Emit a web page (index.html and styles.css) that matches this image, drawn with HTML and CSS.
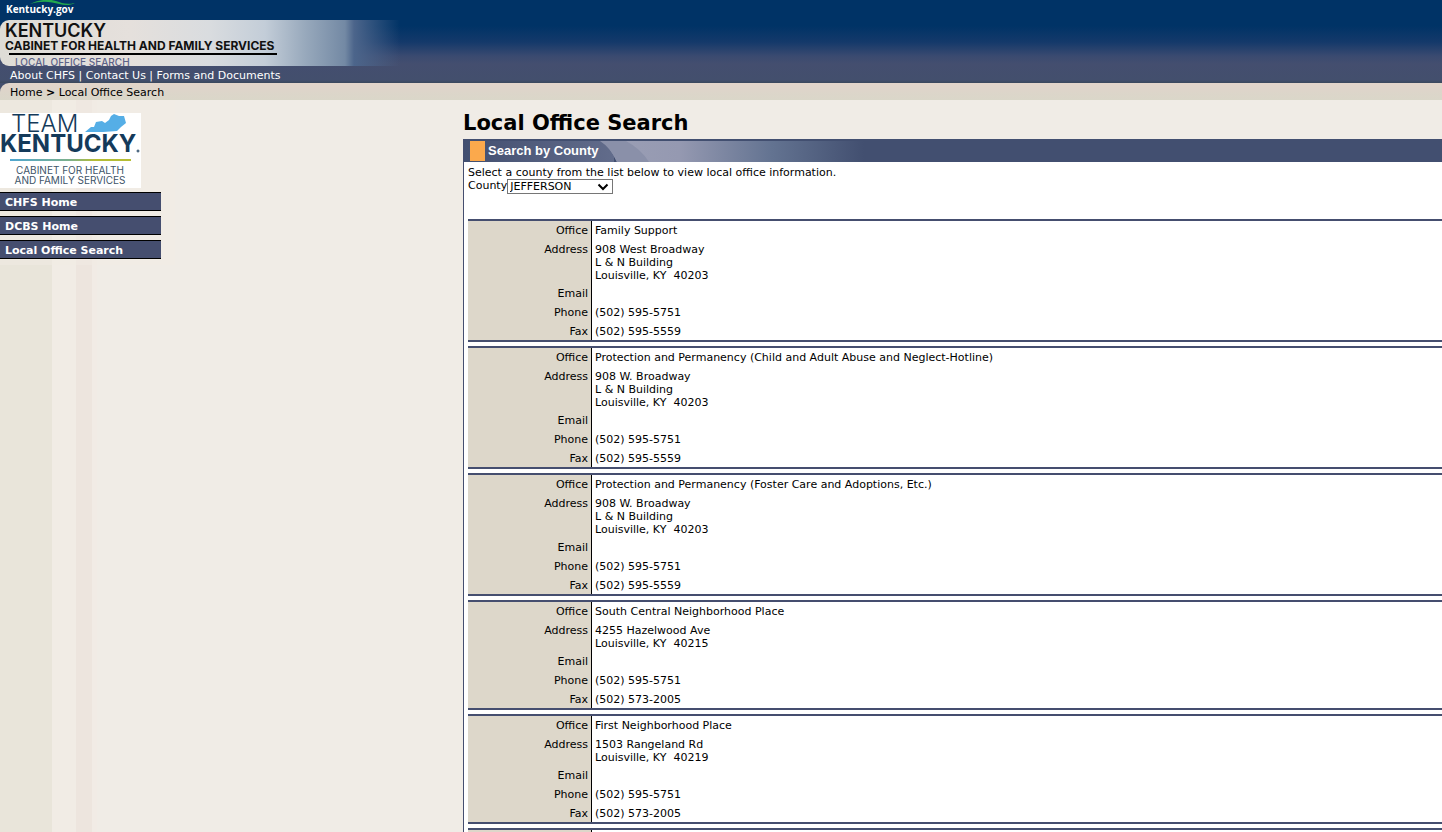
FILE: index.html
```html
<!DOCTYPE html>
<html lang="en">
<head>
<meta charset="utf-8">
<title>Local Office Search</title>
<link rel="stylesheet" href="styles.css">
</head>
<body>
<header class="site-header">
  <a class="portal" href="#">
    <svg class="portal-arc" viewBox="0 0 46 8" aria-hidden="true"><path d="M0 4C10-1 20-1 26 1S36 5 45 3C37 7 30 4 22 2.500S8 2 0 4Z" fill="#22a94f"/></svg>
    <span class="portal-name">Kentucky.gov</span>
  </a>
  <div class="banner">
    <div class="agency">
      <div class="agency-state">KENTUCKY</div>
      <div class="agency-name">CABINET FOR HEALTH AND FAMILY SERVICES</div>
      <div class="agency-section">LOCAL OFFICE SEARCH</div>
    </div>
  </div>
  <nav class="top-nav"><a href="#">About CHFS</a> | <a href="#">Contact Us</a> | <a href="#">Forms and Documents</a></nav>
</header>
<nav class="crumbs"><div class="crumbs-inner"><a href="#">Home</a> <b>&gt;</b> <a href="#">Local Office Search</a></div></nav>
<div class="columns">
  <aside class="side">
    <svg class="team-logo" viewBox="0 0 141 75" role="img" aria-label="Team Kentucky Cabinet for Health and Family Services">
      <rect width="141" height="75" fill="#fff"/>
      <text class="logo-team" x="11" y="19">TEAM</text>
      <path d="M85 19L91 14L94 14L96 9L102 8L105 10L109 7L111 3L114 1L119 3L124 3L126 10L121 14L117 18L103 19Z" fill="#55aee6"/>
      <text class="logo-ky" x="0" y="39">KENTUCKY</text>
      <circle cx="138" cy="38" r="1" fill="none" stroke="#143a5a"/>
      <defs><linearGradient id="rule"><stop offset="0" stop-color="#4fa6d0"/><stop offset=".5" stop-color="#7db08a"/><stop offset=".7" stop-color="#b5bd35"/></linearGradient></defs>
      <rect x="10" y="46" width="121" height="2" fill="url(#rule)"/>
      <text class="logo-small" x="70" y="61">CABINET FOR HEALTH</text>
      <text class="logo-small" x="70" y="71">AND FAMILY SERVICES</text>
    </svg>
    <nav class="side-nav">
      <a href="#">CHFS Home</a>
      <a href="#">DCBS Home</a>
      <a href="#">Local Office Search</a>
    </nav>
  </aside>
  <main class="content">
    <h1>Local Office Search</h1>
    <section class="panel">
      <h2 class="panel-title">
        <svg class="panel-art" viewBox="0 0 400 23" preserveAspectRatio="none" aria-hidden="true">
          <defs>
            <linearGradient id="sheen"><stop offset="0" stop-color="#9b9fb5"/><stop offset=".3" stop-color="#9599b1"/><stop offset=".65" stop-color="#637391"/><stop offset="1" stop-color="#424f70"/></linearGradient>
            <linearGradient id="start"><stop offset="0" stop-color="#424f70"/><stop offset="1" stop-color="#626c8b"/></linearGradient>
          </defs>
          <rect width="150" height="23" fill="url(#start)"/>
          <path d="M136 0H400V23H153Q147 9 136 0Z" fill="url(#sheen)"/>
          <path d="M136 2H162Q177 10 185 23H153Q147 9 136 2Z" fill="#8a90a9"/>
          <rect width="400" height="2" fill="#424f70"/>
        </svg>
        <span class="panel-text">Search by County</span>
      </h2>
      <div class="panel-body">
        <p>Select a county from the list below to view local office information.</p>
        <div class="picker">
          <label for="county">County</label>
          <span class="select-wrap"><select id="county"><option>JEFFERSON</option></select><svg viewBox="0 0 12 8" aria-hidden="true"><path d="M1.5 1.5L6 6L10.500 1.500" fill="none" stroke="#000" stroke-width="2"/></svg></span>
        </div>
        <table class="office"><tbody>
          <tr><th>Office</th><td>Family Support</td></tr>
          <tr class="tight"><th>Address</th><td>908 West Broadway<br>L &amp; N Building<br>Louisville, KY&nbsp; 40203</td></tr>
          <tr><th>Email</th><td></td></tr>
          <tr><th>Phone</th><td>(502) 595-5751</td></tr>
          <tr class="tight"><th>Fax</th><td>(502) 595-5559</td></tr>
        </tbody></table>
        <table class="office"><tbody>
          <tr><th>Office</th><td>Protection and Permanency (Child and Adult Abuse and Neglect-Hotline)</td></tr>
          <tr class="tight"><th>Address</th><td>908 W. Broadway<br>L &amp; N Building<br>Louisville, KY&nbsp; 40203</td></tr>
          <tr><th>Email</th><td></td></tr>
          <tr><th>Phone</th><td>(502) 595-5751</td></tr>
          <tr class="tight"><th>Fax</th><td>(502) 595-5559</td></tr>
        </tbody></table>
        <table class="office"><tbody>
          <tr><th>Office</th><td>Protection and Permanency (Foster Care and Adoptions, Etc.)</td></tr>
          <tr class="tight"><th>Address</th><td>908 W. Broadway<br>L &amp; N Building<br>Louisville, KY&nbsp; 40203</td></tr>
          <tr><th>Email</th><td></td></tr>
          <tr><th>Phone</th><td>(502) 595-5751</td></tr>
          <tr class="tight"><th>Fax</th><td>(502) 595-5559</td></tr>
        </tbody></table>
        <table class="office"><tbody>
          <tr><th>Office</th><td>South Central Neighborhood Place</td></tr>
          <tr class="tight"><th>Address</th><td>4255 Hazelwood Ave<br>Louisville, KY&nbsp; 40215</td></tr>
          <tr><th>Email</th><td></td></tr>
          <tr><th>Phone</th><td>(502) 595-5751</td></tr>
          <tr class="tight"><th>Fax</th><td>(502) 573-2005</td></tr>
        </tbody></table>
        <table class="office"><tbody>
          <tr><th>Office</th><td>First Neighborhood Place</td></tr>
          <tr class="tight"><th>Address</th><td>1503 Rangeland Rd<br>Louisville, KY&nbsp; 40219</td></tr>
          <tr><th>Email</th><td></td></tr>
          <tr><th>Phone</th><td>(502) 595-5751</td></tr>
          <tr class="tight"><th>Fax</th><td>(502) 573-2005</td></tr>
        </tbody></table>
        <table class="office"><tbody>
          <tr><th></th><td></td></tr>
        </tbody></table>
      </div>
    </section>
  </main>
</div>
</body>
</html>
```
FILE: styles.css
```css
* { box-sizing: border-box; }
html { height: 100%; overflow: hidden; }
body {
  margin: 0;
  height: 100%;
  overflow: hidden;
  font: 11px/13px Verdana, "DejaVu Sans", sans-serif;
  color: #000;
  background: linear-gradient(90deg, #e9e5da 0 52px, #f1ece5 52px 76px, #ede5de 76px 92px, #f1ebe5 92px 97px, #f0ece6 97px);
}
a { color: inherit; text-decoration: none; }

.site-header {
  background: linear-gradient(#003366 0, #003366 26px, #14396a 42px, #3a4a70 56px, #444e6f 64px, #434f6d 80px, #3a485c 83px);
}
.portal { display: block; position: relative; height: 20px; padding: 2px 6px; color: #fff; }
.portal-name { position: relative; font: bold 10px/14px "Open Sans", sans-serif; }
.portal-arc { position: absolute; left: 30px; top: 0; width: 46px; height: 8px; }
.banner {
  height: 46px;
  overflow: hidden;
  border-radius: 9px 0 0 9px;
  background: linear-gradient(90deg, #dedcd6 0, #e5e0dc 130px, #d9dcdf 210px, #c3cdd8 265px, #98a9bc 305px, #7389a4 345px, #4c658b 354px, #48628600 400px);
}
.agency { width: 290px; padding: 2px 5px 0; white-space: nowrap; color: #111; }
.agency-state { font: 600 18px/17px Inter, sans-serif; }
.agency-name { font: 700 12px/13px Inter, sans-serif; }
.agency-section {
  margin: 1px 8px 0 4px;
  padding: 0 0 0 6px;
  border-top: 2px solid #000;
  font: 500 10px/14px Inter, sans-serif;
  color: #5c6288;
}
.top-nav { padding: 3px 10px 1px; color: #fff; }
.crumbs { background: #434f6d; }
.crumbs-inner {
  padding: 3px 10px 1px;
  border-radius: 9px 0 0 0;
  background: linear-gradient(#e2d5ca, #ddd5ca 8px, #dad7c9);
}

.columns { display: grid; grid-template-columns: 463px minmax(0, 1fr); }
.side { justify-self: start; width: 175px; padding: 13px 14px 6px 0; align-self: start; background: #f1ece480; }
.team-logo { display: block; width: 141px; height: 75px; }
.logo-team { font: 300 24px Inter, sans-serif; fill: #143a5a; }
.logo-ky { font: 700 24px Inter, sans-serif; fill: #143a5a; }
.logo-small { font: 400 10px Inter, sans-serif; fill: #405468; text-anchor: middle; }
.side-nav { display: grid; gap: 5px; margin-top: 4px; }
.side-nav a {
  padding: 3px 5px 1px;
  border: solid #000;
  border-width: 1px 0;
  background: #454e6f;
  color: #fff;
  font-weight: bold;
}

.content { padding-top: 9px; }
h1 { margin: 0; font-size: 21px; line-height: 28px; padding-bottom: 2px; }
.panel { border-left: 1px solid #454e6f; background: #fff; }
.panel-title { position: relative; margin: 0; height: 23px; background: #424f70; color: #fff; font: bold 13px/24px "Liberation Sans", Arial, sans-serif; }
.panel-art { position: absolute; left: 0; top: 0; width: 400px; height: 23px; }
.panel-text { position: relative; display: block; margin-left: 6px; padding-left: 18px; background: linear-gradient(#fba94c, #fba94c) 0 2px / 15px 20px no-repeat; }
.panel-body { padding: 4px 0 0 4px; }
.panel-body p { margin: 0; }
.picker { display: flex; margin-bottom: 26px; height: 14px; }
.select-wrap { position: relative; height: 15px; }
.select-wrap svg { position: absolute; right: 4px; top: 4px; width: 12px; height: 8px; pointer-events: none; }
select {
  display: block;
  appearance: none;
  width: 106px;
  height: 15px;
  padding: 0 2px;
  border: 1px solid #767676;
  border-radius: 0;
  background: #fff;
  color: #000;
  font: 11px/13px Verdana, "DejaVu Sans", sans-serif;
}
.office {
  width: 100%;
  margin-bottom: 4px;
  border-collapse: separate;
  border-spacing: 0;
  border: solid #454e6f;
  border-width: 2px 0;
}
.office th, .office td { padding: 3px; height: 19px; vertical-align: top; }
.office th { width: 124px; border-right: 1px solid #000; background: #ddd7ca; font-weight: normal; text-align: right; }
.office .tight th, .office .tight td { height: 18px; padding-bottom: 2px; }
```
